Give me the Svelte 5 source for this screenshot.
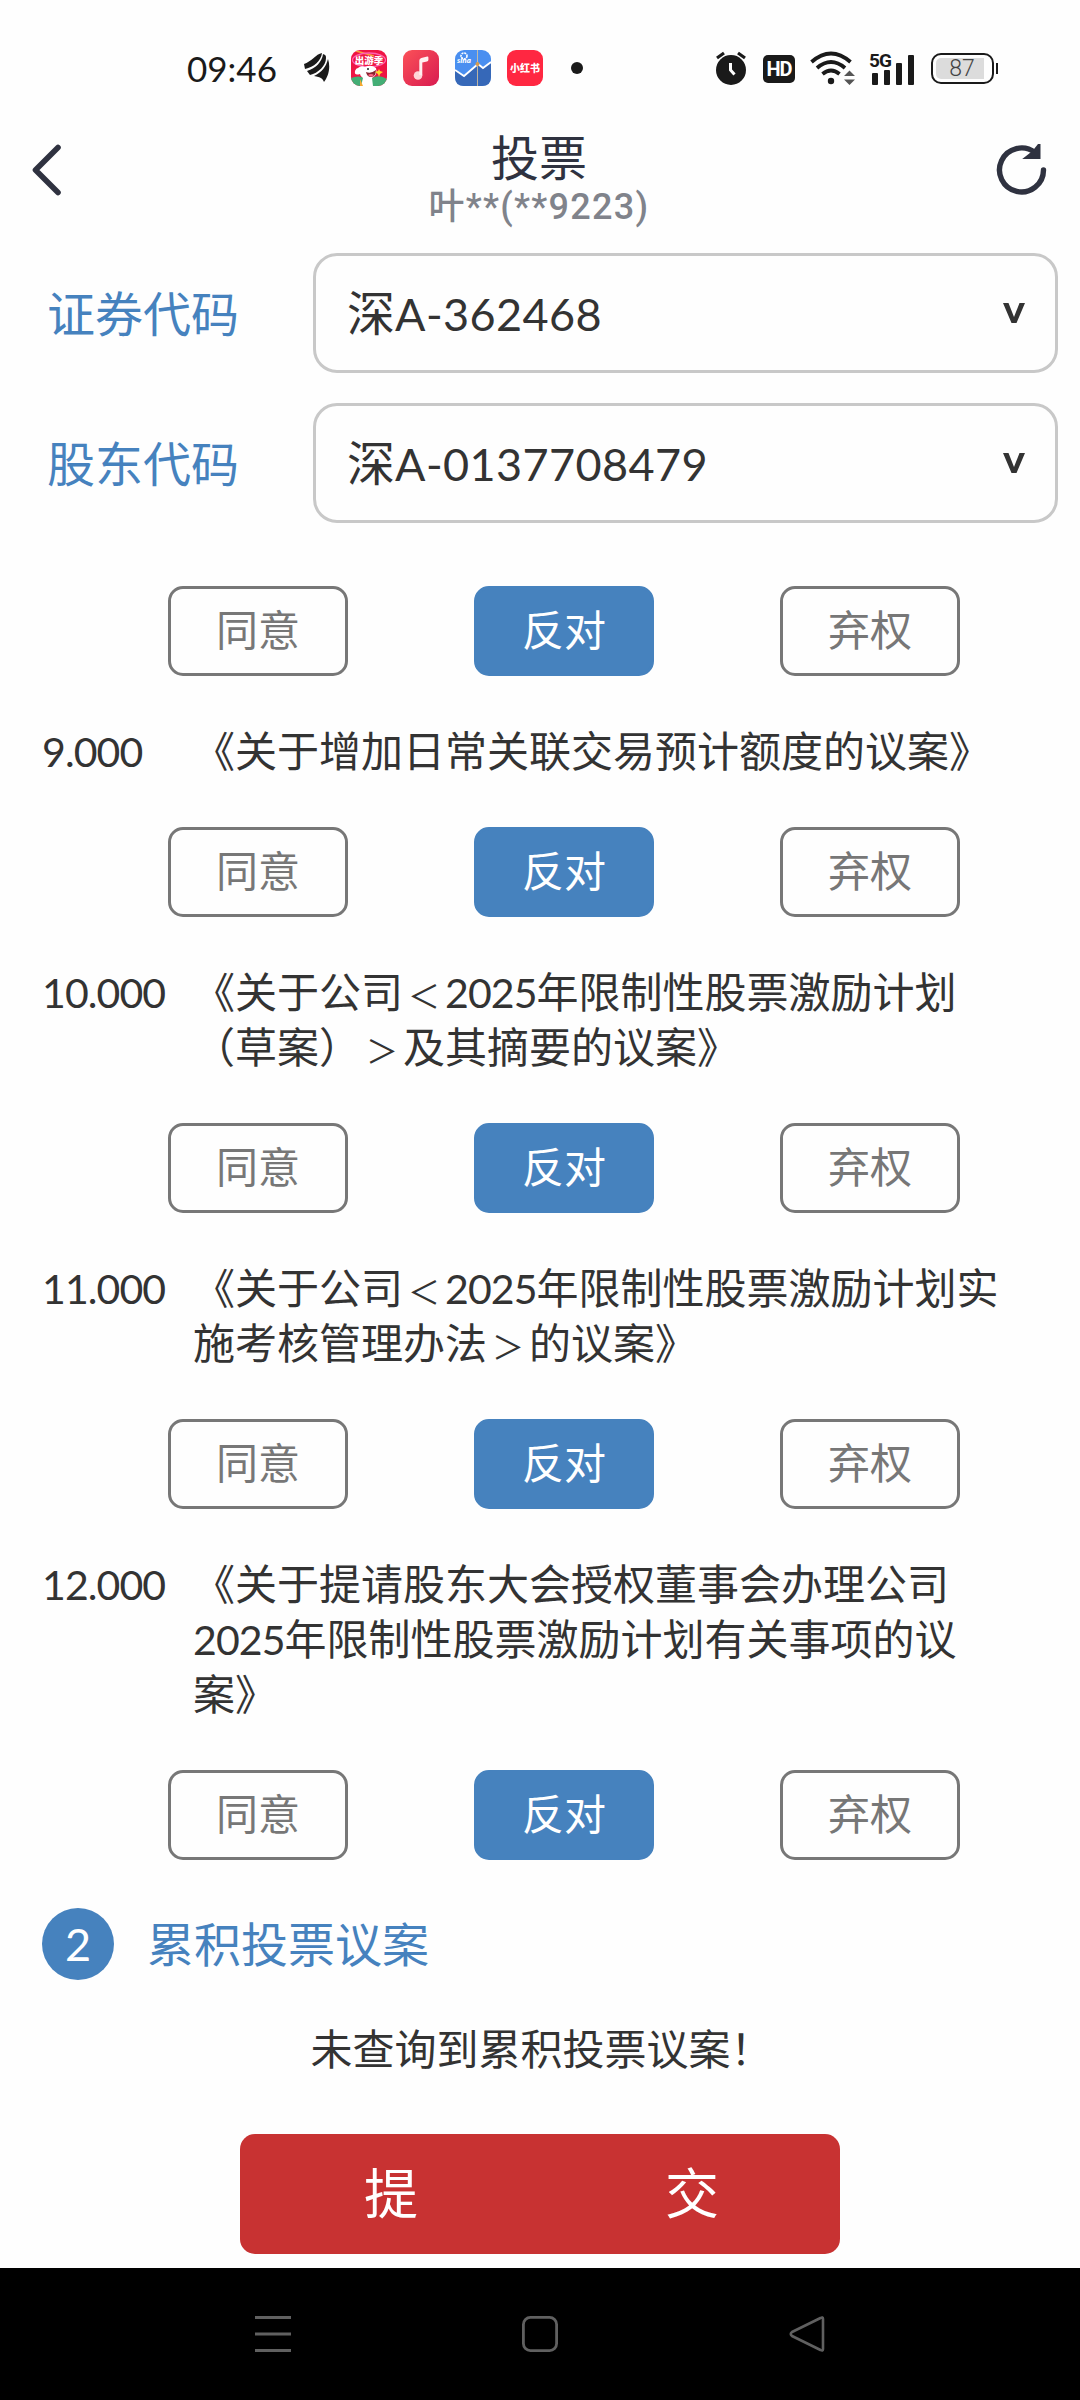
<script lang="ts">
  type Proposal = { code: string; lines: string[] };

  const choices = ["同意", "反对", "弃权"];
  let selected = "反对";

  const accounts = [
    { label: "证券代码", market: "深", value: "A-362468" },
    { label: "股东代码", market: "深", value: "A-0137708479" },
  ];

  const proposals: Proposal[] = [
    { code: "9.000", lines: ["《关于增加日常关联交易预计额度的议案》"] },
    { code: "10.000", lines: ["《关于公司＜2025年限制性股票激励计划", "（草案）＞及其摘要的议案》"] },
    { code: "11.000", lines: ["《关于公司＜2025年限制性股票激励计划实", "施考核管理办法＞的议案》"] },
    {
      code: "12.000",
      lines: ["《关于提请股东大会授权董事会办理公司", "2025年限制性股票激励计划有关事项的议", "案》"],
    },
  ];

  // digits and angle brackets are sized apart from the chinese text
  const split = (line: string) => line.split(/(\d+|[＜＞])/).filter(Boolean);
</script>

{#snippet votes()}
  <div class="votes">
    {#each choices as choice}
      <button class="vote" class:active={choice === selected}>{choice}</button>
    {/each}
  </div>
{/snippet}

<div class="screen">
  <div class="status-bar">
    <span class="clock">09:46</span>
    <div class="notifications">
      <svg class="wing" width="26" height="30" viewBox="0 0 26 30" fill="#1a1a1a">
        <path d="M0 11C7 9 12 1 18 0C17 8 10 14 1 16Z" />
        <path d="M3 18C12 15 18 9 19 1C22 2 22 3 22 5C22 13 14 20 6 22Z" />
        <path d="M10 23C18 19 22 14 24 6C27 15 24 24 20 29C19 26 17 24 10 23Z" />
      </svg>
      <svg width="36" height="36" viewBox="0 0 36 36">
        <defs><clipPath id="tile"><rect width="36" height="36" rx="9" /></clipPath></defs>
        <g clip-path="url(#tile)">
          <rect width="36" height="36" fill="#ee1544" />
          <path d="M0 28Q9 24 18 30Q27 23 36 29V36H0Z" fill="#43ae75" />
          <path d="M5 1L23 6" stroke="#f6a13c" stroke-width="1.5" />
          <ellipse cx="18" cy="10" rx="16.5" ry="7" fill="none" stroke="#ff62ae" stroke-width="1.3" />
          <text x="18" y="14" text-anchor="middle" class="travel">出游季</text>
          <path d="M7 18Q10 15 14 17Q20 14 25 18Q27 25 21 28L22 36H10L12 28Q9 26 9 24Q3 26 4 21Q5 18 7 18Z" fill="#fff" />
          <path d="M15 22Q20 24 25 20Q25 27 20 27Q16 27 15 22Z" fill="#8b2330" />
          <path d="M17 25Q20 23 23 25Q20 28 17 25Z" fill="#ff6684" />
          <circle cx="17" cy="19" r="1" fill="#222" />
          <path d="M28 19L29 21L32 22L29 24L28 27L27 24L24 22L27 21Z" fill="#ffd928" />
          <path d="M9 29L12 36H9Z" fill="#f5a930" />
        </g>
      </svg>
      <svg width="36" height="36" viewBox="0 0 36 36">
        <defs>
          <linearGradient id="music" x1="0" y1="0" x2="1" y2="1">
            <stop offset="0" stop-color="#fb5158" />
            <stop offset="1" stop-color="#d81b50" />
          </linearGradient>
        </defs>
        <rect width="36" height="36" rx="9" fill="url(#music)" />
        <circle cx="15" cy="25.5" r="4.3" fill="#ffd5d8" />
        <path d="M16.3 25V10.5Q16.3 8.6 18.3 8L24.3 6.6Q25.5 6.5 25.4 7.8V10Q25.2 11.2 24 11.5L19.3 12.6V25.5" fill="#fff0f0" />
      </svg>
      <svg width="36" height="36" viewBox="0 0 36 36">
        <rect width="36" height="36" rx="9" fill="#4a8ff0" />
        <path d="M0 20L9 26L23 14L28 18L36 12V27Q36 36 27 36H9Q0 36 0 27Z" fill="#3668b8" />
        <path d="M0 20L9 26L23 14L28 18L36 12" fill="none" stroke="#fff" stroke-width="1.8" />
        <path d="M22.5 0V36" stroke="#e0c79a" stroke-width="0.8" />
        <circle cx="22.5" cy="14" r="2" fill="#d59b50" />
        <circle cx="9" cy="6" r="3" fill="none" stroke="#fff" stroke-width="1.6" stroke-dasharray="2 0.8" />
        <text x="2" y="13" class="sina">sina</text>
      </svg>
      <svg width="36" height="36" viewBox="0 0 36 36">
        <rect width="36" height="36" rx="9" fill="#ff2741" />
        <text x="18" y="22" text-anchor="middle" class="redbook">小红书</text>
      </svg>
      <span class="dot"></span>
    </div>
    <div class="system">
      <svg width="32" height="34" viewBox="0 0 32 34">
        <circle cx="16" cy="19" r="15" fill="#1a1a1a" />
        <path d="M2 7L9 2M23 2L30 7" stroke="#1a1a1a" stroke-width="3.2" />
        <path d="M15.5 12V19L19.5 23.5" fill="none" stroke="#fff" stroke-width="3" />
      </svg>
      <span class="hd">HD</span>
      <svg class="wifi" width="45" height="34" viewBox="0 0 45 34" fill="none" stroke="#1a1a1a" stroke-width="3.8">
        <path d="M1.5 11Q21 -6 40.5 11M7 17Q21 5 35 17M12.5 23Q21 16 29.5 23" />
        <circle cx="21" cy="30" r="3.2" fill="#1a1a1a" stroke="none" />
        <path d="M34 25L39.5 19.5L45 25ZM34 28.5L39.5 34L45 28.5Z" fill="#555" stroke="none" />
      </svg>
      <svg class="signal" width="46" height="36" viewBox="0 -2 46 36" fill="#1a1a1a">
        <text x="0" y="14.5" class="network">5G</text>
        <rect x="3" y="21" width="6" height="12" rx="1" />
        <rect x="15" y="18" width="6" height="15" rx="1" />
        <rect x="27" y="11" width="6" height="22" rx="1" />
        <rect x="39" y="3" width="6" height="30" rx="1" />
      </svg>
      <div class="battery"><span class="level">87</span></div>
    </div>
  </div>

  <header class="title-bar">
    <button class="icon-button" aria-label="返回">
      <svg width="32" height="54" viewBox="0 0 32 54" fill="none" stroke="#2f3240" stroke-width="5.6" stroke-linecap="round" stroke-linejoin="round">
        <path d="M27 4.5L4.5 27L27 49.5" />
      </svg>
    </button>
    <div class="heading">
      <h1>投票</h1>
      <p>叶**(**9223)</p>
    </div>
    <button class="icon-button" aria-label="刷新">
      <svg width="52" height="52" viewBox="0 0 52 52" fill="none" stroke="#2f3240" stroke-width="5.4" stroke-linecap="round">
        <path d="M48.5 26A22 22 0 1 1 40 8.6" />
        <path d="M43 4V12.5H34.5L39 9Z" fill="#2f3240" stroke-width="5" stroke-linejoin="miter" />
      </svg>
    </button>
  </header>

  <section class="accounts">
    {#each accounts as { label, market, value }}
      <div class="account">
        <span class="account-label">{label}</span>
        <div class="select">
          <span class="select-text">{market}<span class="select-number">{value}</span></span>
          <svg width="22" height="22" viewBox="0 0 22 22" fill="#333">
            <path d="M0 1H5.5L11 15L16.5 1H22L13.5 21H8.5Z" />
          </svg>
        </div>
      </div>
    {/each}
  </section>

  <main>
    {@render votes()}
    {#each proposals as { code, lines }}
      <div class="proposal">
        <span class="code">{code}</span>
        <div class="name">
          {#each lines as line}
            <div>{#each split(line) as part}{#if /\d/.test(part)}<span class="digits">{part}</span>{:else if /[＜＞]/.test(part)}<span class="angle">{part}</span>{:else}{part}{/if}{/each}</div>
          {/each}
        </div>
      </div>
      {@render votes()}
    {/each}

    <div class="section-title">
      <span class="badge">2</span>
      <h2>累积投票议案</h2>
    </div>
    <p class="empty">未查询到累积投票议案！</p>
    <button class="submit"><span>提</span><span>交</span></button>
  </main>

  <nav>
    <svg width="36" height="36" viewBox="0 0 36 36" stroke="#606060" stroke-width="3">
      <path d="M0 1.5H36M0 18H36M0 34.5H36" />
    </svg>
    <svg width="36" height="36" viewBox="0 0 36 36" fill="none" stroke="#606060" stroke-width="2.8">
      <rect x="1.4" y="1.4" width="33.2" height="33.2" rx="7" />
    </svg>
    <svg width="36" height="36" viewBox="0 0 36 36" fill="none" stroke="#606060" stroke-width="2.6" stroke-linejoin="round">
      <path d="M31.5 2Q34 0.5 34 3V33Q34 35.5 31.5 34L3 20Q0.5 18 3 16Z" />
    </svg>
  </nav>
</div>

<style>
  :global(body) {
    background: #fff;
  }

  .screen {
    display: flex;
    flex-direction: column;
    box-sizing: border-box;
    width: 1080px;
    height: 2400px;
    background: #fefefe;
    color: #333;
    font-family: Lato, "Noto Sans CJK SC", sans-serif;
    font-size: 42px;
    text-spacing-trim: space-all;
    overflow: hidden;
  }

  h1,
  h2,
  p {
    margin: 0;
    font-weight: 400;
  }

  button {
    padding: 0;
    border: 0;
    background: none;
    color: inherit;
    font: inherit;
  }

  svg {
    display: block;
    flex: none;
  }

  .status-bar {
    display: flex;
    align-items: center;
    height: 136px;
    padding: 0 81px 0 187px;
    box-sizing: border-box;
    color: #1a1a1a;
  }

  .clock {
    width: 117px;
    font-size: 35px;
  }

  .notifications {
    display: flex;
    align-items: center;
    gap: 16px;
  }

  .wing {
    margin-right: 5px;
  }

  .travel {
    fill: #fff;
    font: 900 9.5px "Noto Sans CJK SC", sans-serif;
  }

  .sina {
    fill: #fff;
    font: italic 900 8px Lato, sans-serif;
  }

  .redbook {
    fill: #fff;
    font: 900 10px "Noto Sans CJK SC", sans-serif;
  }

  .dot {
    width: 12px;
    height: 12px;
    margin-left: 12px;
    border-radius: 50%;
    background: #1a1a1a;
  }

  .system {
    display: flex;
    align-items: center;
    margin-left: auto;
  }

  .hd {
    width: 32px;
    height: 28px;
    margin: 2px 15px 0 16px;
    border-radius: 5px;
    background: #1a1a1a;
    color: #fff;
    font: 700 20px/28px Roboto, sans-serif;
    letter-spacing: -1px;
    text-align: center;
  }

  .wifi {
    margin-right: 14px;
  }

  .network {
    font: 700 19px Roboto, sans-serif;
    letter-spacing: -1px;
  }

  .signal {
    margin-right: 16px;
    overflow: visible;
  }

  .battery {
    position: relative;
    box-sizing: border-box;
    width: 63px;
    height: 31px;
    margin-right: 5px;
    padding: 3px;
    border: 2px solid #1a1a1a;
    border-radius: 10px;
  }

  .battery::after {
    content: "";
    position: absolute;
    right: -6px;
    top: 8px;
    width: 2px;
    height: 11px;
    background: #1a1a1a;
  }

  .level {
    display: block;
    width: 48px;
    height: 21px;
    padding-left: 4px;
    box-sizing: border-box;
    border-radius: 5px 0 0 5px;
    background: #dcdcdc;
    color: #444;
    font: 300 23px/22px Roboto, sans-serif;
    text-align: center;
  }

  .title-bar {
    display: flex;
    justify-content: space-between;
    height: 117px;
    padding: 0 33px 0 31px;
    color: #2f3240;
    font-family: Roboto, "Noto Sans CJK SC", sans-serif;
  }

  .icon-button {
    width: 52px;
    height: 68px;
  }

  .heading {
    padding-top: 2px;
    text-align: center;
  }

  .heading h1 {
    font-size: 48px;
    line-height: 44px;
  }

  .heading p {
    color: #80838b;
    font-size: 36px;
    font-weight: 500;
    letter-spacing: 1.3px;
    line-height: 50px;
  }

  .accounts {
    display: flex;
    flex-direction: column;
    gap: 30px;
    padding: 0 22px 0 47px;
    font-size: 48px;
  }

  .account {
    display: flex;
    align-items: center;
    justify-content: space-between;
  }

  .account-label {
    padding-bottom: 4px;
    color: #4682be;
  }

  .select {
    display: flex;
    align-items: center;
    justify-content: space-between;
    box-sizing: border-box;
    width: 745px;
    height: 120px;
    padding: 0 30px 0 31px;
    border: 3px solid #c8c8c8;
    border-radius: 24px;
  }

  .select-text {
    padding-bottom: 6px;
  }

  .select-number {
    font-size: 45px;
    letter-spacing: 0.4px;
  }

  main {
    display: flex;
    flex-direction: column;
    padding-top: 63px;
  }

  .votes {
    display: flex;
    gap: 126px;
    padding-left: 168px;
  }

  .vote {
    box-sizing: border-box;
    width: 180px;
    height: 90px;
    padding-bottom: 7px;
    border: 3px solid #777;
    border-radius: 15px;
    color: #777;
  }

  .vote.active {
    border-color: #4682be;
    background: #4682be;
    color: #fff;
  }

  .proposal {
    display: flex;
    padding: 48px 40px 48px 42px;
    line-height: 55px;
    white-space: nowrap;
  }

  .code {
    width: 151px;
    font-size: 41px;
    letter-spacing: -0.9px;
  }

  .name > div {
    height: 55px;
  }

  .digits {
    font-size: 41px;
    letter-spacing: -0.9px;
  }

  .angle {
    display: inline-block;
    width: 42px;
    font-size: 32px;
    text-align: center;
  }

  .section-title {
    display: flex;
    align-items: center;
    gap: 33px;
    height: 72px;
    margin-top: 48px;
    padding-left: 42px;
    color: #4682be;
  }

  .section-title h2 {
    padding-bottom: 5px;
    font-size: 47px;
  }

  .badge {
    width: 72px;
    height: 72px;
    border-radius: 50%;
    background: #4682be;
    color: #fff;
    font-size: 45px;
    line-height: 72px;
    text-align: center;
  }

  .empty {
    margin-top: 39px;
    padding-left: 3px;
    line-height: 60px;
    text-align: center;
  }

  .submit {
    display: flex;
    align-items: center;
    justify-content: center;
    gap: 247px;
    box-sizing: border-box;
    width: 600px;
    height: 120px;
    margin: 55px auto 0;
    padding: 0 0 7px 3px;
    border-radius: 15px;
    background: #c83232;
    color: #fff;
    font-size: 54px;
  }

  nav {
    display: flex;
    align-items: center;
    justify-content: space-between;
    box-sizing: border-box;
    height: 132px;
    margin-top: auto;
    padding: 0 255px;
    background: #000;
  }
</style>
